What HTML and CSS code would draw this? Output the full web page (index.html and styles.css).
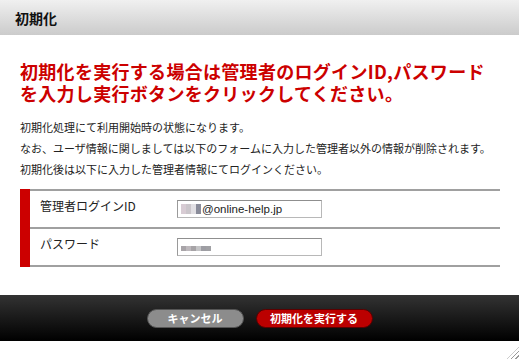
FILE: index.html
```html
<!DOCTYPE html>
<html lang="ja">
<head>
  <meta charset="UTF-8" />
  <title>初期化</title>
  <link rel="stylesheet" href="styles.css">
</head>
<body>

<div class="dialog">
  <header class="dialog-header">
    <h1>初期化</h1>
  </header>

  <div class="dialog-body">
    <h2 class="lead">初期化を実行する場合は管理者のログインID,パスワード<br>を入力し実行ボタンをクリックしてください。</h2>

    <p>初期化処理にて利用開始時の状態になります。</p>
    <p>なお、ユーザ情報に関しましては以下のフォームに入力した管理者以外の情報が削除されます。</p>
    <p>初期化後は以下に入力した管理者情報にてログインください。</p>

    <div class="form-table">
      <div class="form-row">
        <div class="form-label">管理者ログインID</div>
        <div class="form-field">
          <span class="text-box">
            <span class="blur">
              <i class="px c1"></i><i class="px c2"></i><i class="px c3"></i><i class="px c4"></i>
            </span>@online-help.jp
          </span>
        </div>
      </div>
      <div class="form-row">
        <div class="form-label">パスワード</div>
        <div class="form-field">
          <span class="text-box">
            <span class="dots">
              <i class="dot d1"></i><i class="dot d2"></i><i class="dot d3"></i><i class="dot d4"></i><i class="dot d5"></i><i class="dot d6"></i>
            </span>
          </span>
        </div>
      </div>
    </div>
  </div>

  <footer class="dialog-footer">
    <button class="btn btn-cancel">キャンセル</button>
    <button class="btn btn-run">初期化を実行する</button>
  </footer>

  <div class="grip"></div>
</div>

</body>
</html>
```

FILE: styles.css
```css
* {
  margin: 0;
  padding: 0;
  box-sizing: border-box;
}
body {
  font-family: "Noto Sans CJK JP", "Noto Sans", sans-serif;
  background: #fff;
  color: #222;
  width: 519px;
  height: 359px;
  overflow: hidden;
}

.dialog {
  position: relative;
  height: 359px;
}

.dialog-header {
  height: 35px;
  background: linear-gradient(#f0f0f0, #cbcbcb);
  padding-left: 15px;
  display: flex;
  align-items: center;
}
.dialog-header h1 {
  font-size: 14px;
  font-weight: bold;
  color: #111;
  line-height: 1;
}

.dialog-body {
  padding: 25px 19px 0 20px;
  height: 260px;
}

.lead {
  color: #cc0000;
  font-size: 18px;
  font-weight: bold;
  line-height: 22px;
  letter-spacing: 0.3px;
  margin-bottom: 13px;
}

.dialog-body p {
  font-size: 11px;
  line-height: 21px;
  color: #222;
}

.form-table {
  margin-top: 9px;
  border-left: 10px solid #cc0000;
  width: 480px;
}
.form-row {
  display: flex;
  align-items: center;
  height: 38px;
  border-top: 2px solid #a0a0a0;
}
.form-row:last-child {
  border-bottom: 2px solid #a0a0a0;
  height: 40px;
}
.form-label {
  width: 147px;
  padding-left: 10px;
  font-size: 12px;
  color: #222;
  margin-top: -7px;
}
.form-field {
  flex: 1;
}

.text-box {
  display: flex;
  align-items: center;
  width: 145px;
  height: 18px;
  border: 1px solid #b8b8b8;
  border-top-color: #8f8f8f;
  border-left-color: #9a9a9a;
  padding-left: 3px;
  font-family: "Liberation Sans", Arial, sans-serif;
  font-size: 11.5px;
  color: #222;
}

.blur {
  display: flex;
  margin-right: 1px;
}
.px {
  display: block;
  width: 5px;
  height: 10px;
}
.c1 { background: #d8ccd4; }
.c2 { background: #cbc6cb; }
.c3 { background: #e2e0e4; }
.c4 { background: #8a8c9a; }

.dots {
  display: flex;
  margin-top: 2px;
}
.dot {
  display: block;
  width: 5px;
  height: 5px;
}
.d1 { background: #a8a4a8; }
.d2 { background: #bdb8bc; }
.d3 { background: #a6a3a6; }
.d4 { background: #c4c4c6; }
.d5 { background: #9d9da3; }
.d6 { background: #a0a0a4; }

.dialog-footer {
  height: 46px;
  background: linear-gradient(#333, #000);
  display: flex;
  justify-content: center;
  align-items: center;
  gap: 12px;
}

.btn {
  height: 19px;
  border-radius: 10px;
  font-family: "Noto Sans CJK JP", sans-serif;
  font-size: 11px;
  font-weight: bold;
  color: #fff;
  cursor: pointer;
  line-height: 1;
}
.btn-cancel {
  width: 97px;
  background: #8c8c8c;
  border: 1px solid #555;
}
.btn-run {
  width: 117px;
  background: #bb0000;
  border: 1px solid #5a0000;
}

.grip {
  position: absolute;
  right: 0;
  bottom: 0;
  width: 12px;
  height: 12px;
  background: repeating-linear-gradient(135deg, transparent 0 2px, #999 2px 3px);
  clip-path: polygon(100% 0, 100% 100%, 0 100%);
}
```
